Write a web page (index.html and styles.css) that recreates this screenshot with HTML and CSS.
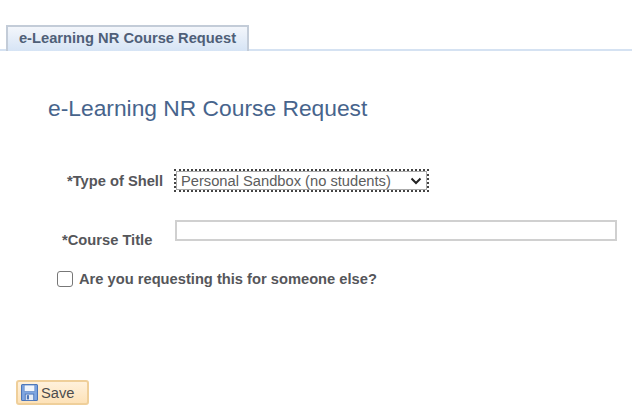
FILE: index.html
```html
<!DOCTYPE html>
<html lang="en">
<head>
    <meta charset="UTF-8">
    <title>e-Learning NR Course Request</title>
    <link rel="stylesheet" href="styles.css">
</head>
<body>
    <div class="tab_bar">
        <div class="tab">e-Learning NR Course Request</div>
    </div>

    <h1 class="page_title">e-Learning NR Course Request</h1>

    <div class="row row_shell">
        <label class="label label_shell" for="shell">*Type of Shell</label>
        <div class="select_box">
            <span class="select_text" id="shell">Personal Sandbox (no students)</span>
            <svg class="chevron" width="12" height="8" viewBox="0 0 12 8">
                <path d="M1.5 1.5 L6 6 L10.5 1.5" fill="none" stroke="#222" stroke-width="2"/>
            </svg>
        </div>
    </div>

    <div class="row row_title">
        <label class="label label_title" for="title">*Course Title</label>
        <input class="text_input" id="title" type="text">
    </div>

    <div class="row row_check">
        <span class="check"></span>
        <span class="label">Are you requesting this for someone else?</span>
    </div>

    <button class="save_btn">
        <svg class="save_icon" width="17" height="17" viewBox="0 0 16 16">
            <rect x="0.5" y="0.5" width="15" height="15" rx="1" fill="#7fa6e0" stroke="#4a74b8"/>
            <rect x="3" y="1" width="10" height="6" fill="#f2f6fc" stroke="#5f86c4" stroke-width="0.6"/>
            <rect x="4" y="9.5" width="8" height="6" fill="#e8edf5" stroke="#4a74b8" stroke-width="0.8"/>
            <rect x="5.5" y="10.5" width="2" height="4" fill="#4a74b8"/>
        </svg>
        Save
    </button>
</body>
</html>
```

FILE: styles.css
```css
body{
    margin: 0;
    background: #fff;
    font-family: "Liberation Sans", Arial, sans-serif;
    color: #4d4d4d;
}

.tab_bar{
    margin-top: 25px;
    padding-left: 6px;
    border-bottom: 2px solid #d5e2f2;
    height: 24px;
    display: flex;
}

.tab{
    width: 243px;
    height: 26px;
    border: 2px solid #c3ccd8;
    border-bottom: none;
    box-sizing: border-box;
    background: linear-gradient(#f3f6fb, #d6e4f5);
    color: #4f5f78;
    font-size: 14.7px;
    font-weight: bold;
    line-height: 22px;
    text-align: center;
}

.page_title{
    margin: 43px 0 0 48px;
    font-size: 22.8px;
    line-height: 28px;
    font-weight: normal;
    color: #47648c;
}

.row{
    display: flex;
    align-items: center;
}

.label{
    font-size: 14.7px;
    font-weight: bold;
    color: #55565a;
}

.row_shell{
    margin-top: 47px;
    padding-left: 67px;
}

.label_shell{
    width: 107px;
}

.select_box{
    width: 255px;
    height: 23px;
    box-sizing: border-box;
    border: 2px dotted #444;
    box-shadow: inset 0 0 0 1px #aaa;
    display: flex;
    align-items: center;
    justify-content: space-between;
    padding: 0 5px 0 5px;
}

.select_text{
    font-size: 14.7px;
    color: #5c5c5c;
}

.row_title{
    margin-top: 28px;
    padding-left: 62px;
    align-items: flex-start;
}

.label_title{
    width: 113px;
    margin-top: 12px;
}

.text_input{
    width: 442px;
    height: 21px;
    box-sizing: border-box;
    border: 2px solid #d0d0d0;
    margin: 0;
    padding: 0;
}

.row_check{
    margin-top: 23px;
    padding-left: 57px;
}

.check{
    width: 16px;
    height: 16px;
    box-sizing: border-box;
    border: 1.5px solid #777;
    border-radius: 3px;
    margin-right: 6px;
}

.save_btn{
    display: flex;
    align-items: center;
    gap: 3px;
    width: 73px;
    height: 25px;
    margin: 93px 0 0 16px;
    padding: 0 0 0 3px;
    border: 2px solid #efcf9a;
    border-radius: 3px;
    background: linear-gradient(#fff1dc, #fde2b8);
    color: #4d4d4d;
    font-family: "Liberation Sans", Arial, sans-serif;
    font-size: 14.7px;
}
```
